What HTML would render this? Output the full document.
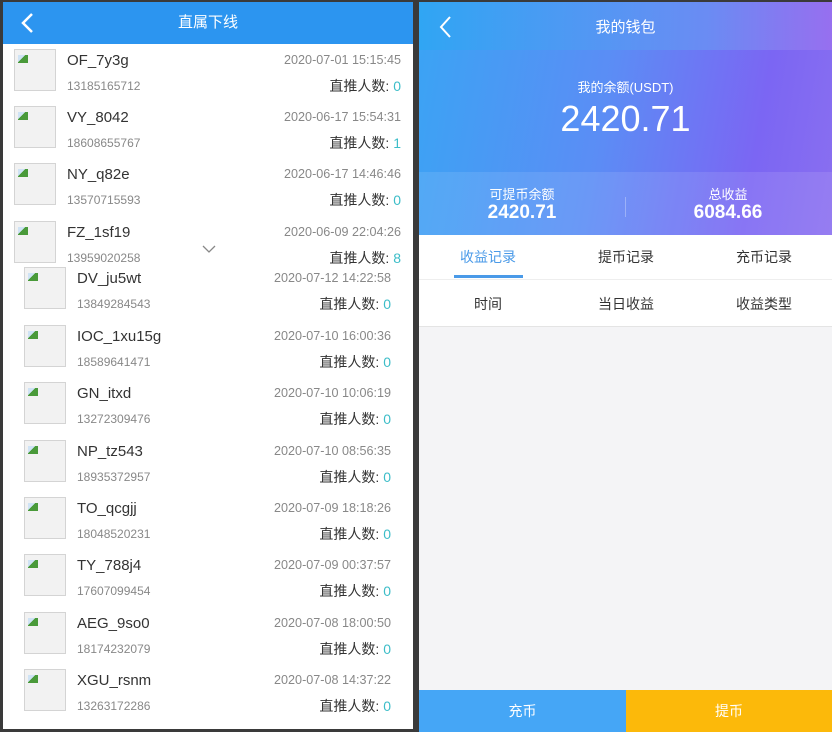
<!DOCTYPE html>
<html><head><meta charset="utf-8"><style>
*{margin:0;padding:0;box-sizing:border-box}
html,body{width:832px;height:732px;overflow:hidden}
body{background:#3a3a3a;position:relative;font-family:"Liberation Sans","Noto Sans CJK SC",sans-serif}
.p{position:absolute}
#L{position:absolute;left:3px;top:2px;width:410px;height:727px;background:#fff;overflow:hidden}
#R{position:absolute;left:419px;top:2px;width:413px;height:730px;background:#f4f4f6;overflow:hidden}
.hd{position:absolute;left:0;top:0;width:100%;height:42px;background:#2c95f0;color:#fff;font-size:15px;text-align:center;line-height:42px}
.av{position:absolute;width:42px;height:42px;border:1px solid #d4d4d4;background:#f2f2f2}
.av:after{content:"";position:absolute;left:3px;top:5px;width:10px;height:8px;background:linear-gradient(135deg,#cfe3f5 40%,#4a9a3a 40%)}
.nm{position:absolute;font-size:15px;color:#333}
.ph{position:absolute;font-size:12px;color:#888}
.dt{position:absolute;font-size:12.6px;color:#888;text-align:right;width:200px}
.ct{position:absolute;font-size:14px;color:#333;text-align:right;width:200px}
.ct b{font-weight:normal;color:#3cbdc8}
.c{position:absolute;text-align:center;color:#fff}
</style></head><body>
<div id="L">
<div class="hd">直属下线</div>
<svg class="p" style="left:16px;top:10px" width="16" height="22"><path d="M13 2 L4 11 L13 20" stroke="#fff" stroke-width="2.5" fill="none"/></svg>
<div id="list"></div>
<svg class="p" style="left:199px;top:243px" width="14" height="9"><path d="M1 1 L7 7 L13 1" stroke="#888" stroke-width="1.3" fill="none"/></svg>
</div>
<div id="R">
<div class="p" style="left:0;top:0;width:413px;height:233px;background:linear-gradient(100deg,#3aa4f4 0%,#5b8df5 45%,#7b66f3 80%,#8a6ff0 100%)"></div>
<div class="p" style="left:0;top:0;width:413px;height:48px;background:linear-gradient(90deg,#2ea6f3,#6a8ff3 70%,#9a70ef);opacity:.85"></div>
<div class="p" style="left:0;top:170px;width:413px;height:63px;background:rgba(255,255,255,.1)"></div>
<svg class="p" style="left:18px;top:13px" width="16" height="24"><path d="M13 2 L4 12 L13 22" stroke="#fff" stroke-width="2" fill="none"/></svg>
<div class="c" style="left:0;width:413px;top:14px;font-size:15px">我的钱包</div>
<div class="c" style="left:0;width:413px;top:75px;font-size:13px">我的余额(USDT)</div>
<div class="c" style="left:0;width:413px;top:96px;font-size:36px">2420.71</div>
<div class="c" style="left:0;width:206px;top:182px;font-size:13px">可提币余额</div>
<div class="c" style="left:0;width:206px;top:200px;font-size:19px;font-weight:bold">2420.71</div>
<div class="c" style="left:206px;width:206px;top:182px;font-size:13px">总收益</div>
<div class="c" style="left:206px;width:206px;top:200px;font-size:19px;font-weight:bold">6084.66</div>
<div class="p" style="left:206px;top:195px;width:1px;height:20px;background:rgba(255,255,255,.3)"></div>
<div class="p" style="left:0;top:233px;width:413px;height:92px;background:#fff"></div>
<div class="c" style="left:0;width:138px;top:245px;font-size:14px;color:#4a9ae8">收益记录</div>
<div class="c" style="left:138px;width:138px;top:245px;font-size:14px;color:#333">提币记录</div>
<div class="c" style="left:276px;width:138px;top:245px;font-size:14px;color:#333">充币记录</div>
<div class="p" style="left:35px;top:273px;width:69px;height:3px;background:#4a9ae8"></div>
<div class="p" style="left:0;top:277px;width:413px;height:1px;background:#eee"></div>
<div class="c" style="left:0;width:138px;top:292px;font-size:14px;color:#333">时间</div>
<div class="c" style="left:138px;width:138px;top:292px;font-size:14px;color:#333">当日收益</div>
<div class="c" style="left:276px;width:138px;top:292px;font-size:14px;color:#333">收益类型</div>
<div class="p" style="left:0;top:324px;width:413px;height:1px;background:#e4e4e4"></div>
<div class="c" style="left:0;top:688px;width:207px;height:42px;background:#45a6f6;line-height:42px;font-size:14px">充币</div>
<div class="c" style="left:207px;top:688px;width:206px;height:42px;background:#fcb90a;line-height:42px;font-size:14px">提币</div>
</div>
<script>
var d=[
[0,46,"OF_7y3g","13185165712","2020-07-01 15:15:45","0"],
[0,103,"VY_8042","18608655767","2020-06-17 15:54:31","1"],
[0,160,"NY_q82e","13570715593","2020-06-17 14:46:46","0"],
[0,218,"FZ_1sf19","13959020258","2020-06-09 22:04:26","8"],
[1,264,"DV_ju5wt","13849284543","2020-07-12 14:22:58","0"],
[1,322,"IOC_1xu15g","18589641471","2020-07-10 16:00:36","0"],
[1,379,"GN_itxd","13272309476","2020-07-10 10:06:19","0"],
[1,437,"NP_tz543","18935372957","2020-07-10 08:56:35","0"],
[1,494,"TO_qcgjj","18048520231","2020-07-09 18:18:26","0"],
[1,551,"TY_788j4","17607099454","2020-07-09 00:37:57","0"],
[1,609,"AEG_9so0","18174232079","2020-07-08 18:00:50","0"],
[1,666,"XGU_rsnm","13263172286","2020-07-08 14:37:22","0"]];
var h="";d.forEach(function(r){var o=r[0]?10:0,y=r[1]+1;
h+='<div class="av" style="left:'+(11+o)+'px;top:'+y+'px"></div>'+
'<div class="nm" style="left:'+(64+o)+'px;top:'+(y+3)+'px">'+r[2]+'</div>'+
'<div class="ph" style="left:'+(64+o)+'px;top:'+(y+30)+'px">'+r[3]+'</div>'+
'<div class="dt" style="left:'+(198-o)+'px;top:'+(y+4)+'px">'+r[4]+'</div>'+
'<div class="ct" style="left:'+(198-o)+'px;top:'+(y+27)+'px">直推人数: <b>'+r[5]+'</b></div>';});
document.getElementById("list").innerHTML=h;
</script>
</body></html>
